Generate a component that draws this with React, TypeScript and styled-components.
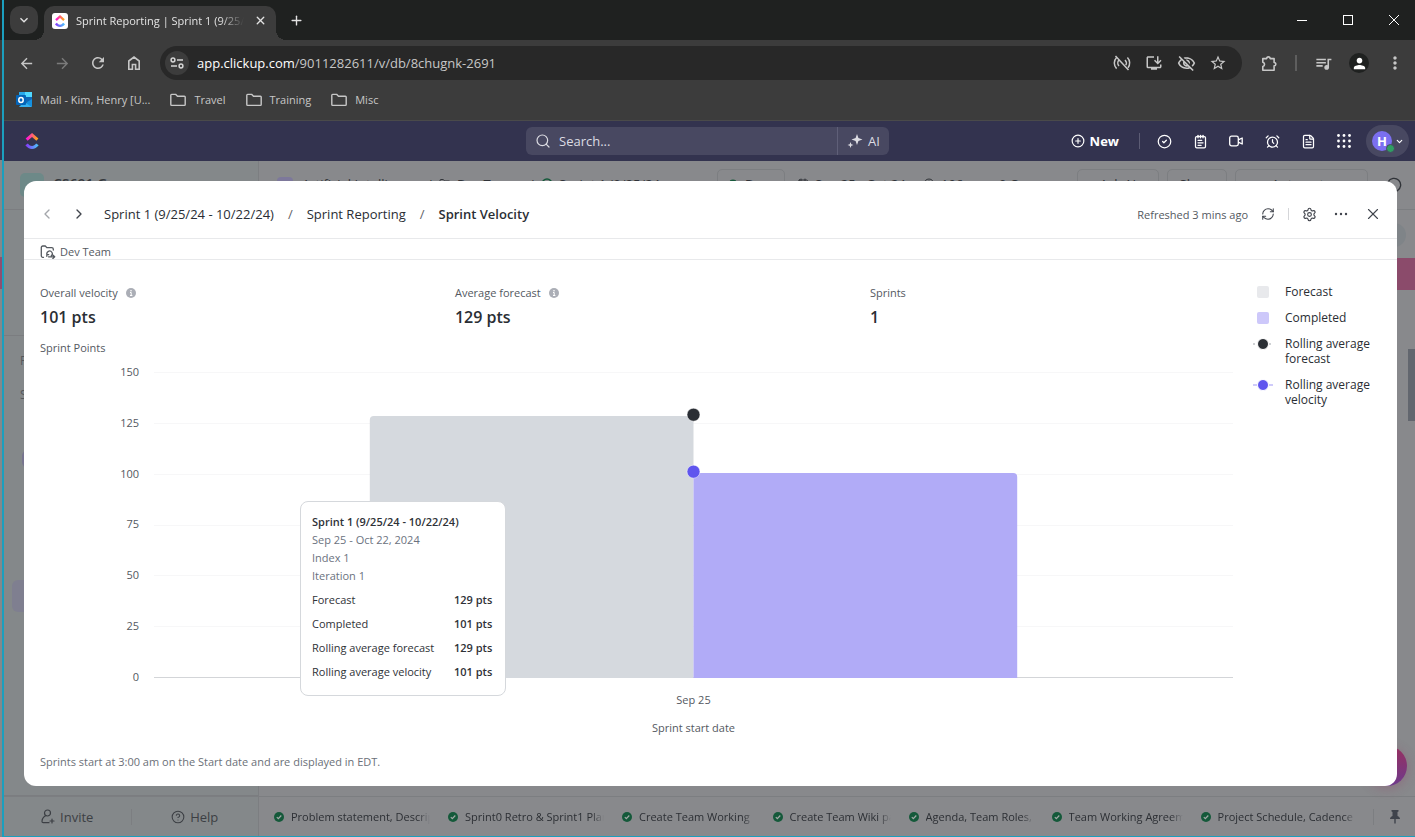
import React from "react";
import styled, { createGlobalStyle, css } from "styled-components";
import {
  MdArrowBack,
  MdArrowForward,
  MdRefresh,
  MdOutlineInstallDesktop,
  MdOutlineVisibilityOff,
  MdStarBorder,
  MdQueueMusic,
  MdMoreVert,
  MdPerson,
  MdKeyboardArrowDown,
} from "react-icons/md";
import {
  AlarmClock,
  Calendar,
  ChevronDown,
  ChevronLeft,
  ChevronRight,
  Circle,
  CircleCheck,
  CircleHelp,
  CirclePlus,
  Clock,
  FileText,
  Folder,
  MessageCircle,
  NotepadText,
  Plus,
  RefreshCw,
  Search,
  Settings,
  X,
} from "lucide-react";

const GlobalStyle = createGlobalStyle`
  *, *::before, *::after { box-sizing: border-box; }
  body { margin: 0; font-family: "Open Sans", "Noto Sans", sans-serif; font-size: 13px; color: #2a2e34; }
  button, input { font: inherit; color: inherit; }
  button { background: none; border: 0; padding: 0; cursor: pointer; }
  a { color: inherit; text-decoration: none; }
  svg { display: block; flex: none; }
`;

/* ---------- desktop and browser window ---------- */

const Desktop = styled.div`
  display: flex;
  min-height: 100vh;
`;

const NeighbourEdge = styled.div`
  width: 2px;
  background: linear-gradient(
    #1f2120 0 40px,
    #3c3c3c 40px 120px,
    #33334f 120px 160px,
    #84888a 160px 257px,
    #8f4f6f 257px 289px,
    #84888a 289px
  );
`;

const BrowserWindow = styled.div`
  flex: 1;
  min-width: 0;
  display: flex;
  flex-direction: column;
  border-left: 2px solid #1b9fbe;
  border-bottom: 1px solid #1b9fbe;
`;

const TabStrip = styled.div`
  height: 40px;
  display: flex;
  background: #1f2120;
  color: #e3e3e3;
  padding-left: 6px;
`;

const TabSearch = styled.button`
  width: 28px;
  height: 28px;
  margin: 6px 6px 0 0;
  border-radius: 10px;
  background: #3c3c3c;
  display: grid;
  place-items: center;
`;

const Tab = styled.div`
  position: relative;
  width: 232px;
  height: 34px;
  margin-top: 6px;
  padding: 0 8px 5px;
  border-radius: 10px 10px 0 0;
  background: #3c3c3c;
  display: flex;
  align-items: center;
  gap: 8px;
  font-size: 11px;
  &::before,
  &::after {
    content: "";
    position: absolute;
    bottom: 0;
    width: 10px;
    height: 10px;
  }
  &::before {
    left: -10px;
    background: radial-gradient(circle at 0 0, transparent 10px, #3c3c3c 10px);
  }
  &::after {
    right: -10px;
    background: radial-gradient(circle at 100% 0, transparent 10px, #3c3c3c 10px);
  }
`;

const Favicon = styled.span`
  width: 16px;
  height: 16px;
  border-radius: 3px;
  background: #fff;
  display: grid;
  place-items: center;
`;

const FadingText = styled.span<{ $fade?: number }>`
  flex: 1;
  min-width: 0;
  overflow: hidden;
  white-space: nowrap;
  mask-image: linear-gradient(to left, transparent, #000 ${(p) => p.$fade ?? 24}px);
`;

const TabButton = styled.button`
  width: 16px;
  height: 16px;
  display: grid;
  place-items: center;
`;

const NewTab = styled(TabButton)`
  width: 40px;
  height: 40px;
`;

const WindowControls = styled.div`
  margin-left: auto;
  width: 136px;
  display: flex;
  overflow: hidden;
  color: #fff;
`;

const WindowButton = styled.button`
  flex: none;
  width: 46px;
  height: 40px;
  display: grid;
  place-items: center;
`;

const Toolbar = styled.div`
  height: 46px;
  display: flex;
  align-items: center;
  background: #3c3c3c;
  color: #c7c7c7;
  padding: 0 2px 0 4px;
`;

const ToolButton = styled.button<{ $dim?: boolean; $width?: number }>`
  width: ${(p) => p.$width ?? 36}px;
  height: 36px;
  display: grid;
  place-items: center;
  color: ${(p) => (p.$dim ? "#7b7b7b" : "#c7c7c7")};
`;

const Omnibox = styled.div`
  flex: 1;
  height: 34px;
  margin: 0 9px 0 8px;
  padding: 0 8px 0 5px;
  border-radius: 17px;
  background: #282828;
  display: flex;
  align-items: center;
`;

const SiteInfo = styled.button`
  width: 24px;
  height: 24px;
  border-radius: 12px;
  background: #3c3c3c;
  display: grid;
  place-items: center;
  margin-right: 8px;
`;

const UrlText = styled.div`
  flex: 1;
  font-size: 13px;
  color: #c7c7c7;
  b {
    font-weight: 400;
    color: #fff;
  }
`;

const ToolDivider = styled.span`
  width: 2px;
  height: 16px;
  margin: 0 8px;
  background: #5e5e5e;
`;

const ProfileDot = styled.span`
  width: 20px;
  height: 20px;
  border-radius: 10px;
  background: #1f2120;
  color: #fff;
  display: grid;
  place-items: center;
`;

const Bookmarks = styled.nav`
  height: 35px;
  display: flex;
  align-items: center;
  gap: 20px;
  padding: 0 12px 7px;
  background: #3c3c3c;
  border-bottom: 1px solid #4a4a4a;
  color: #c7c7c7;
  font-size: 11px;
`;

const Bookmark = styled.a`
  display: flex;
  align-items: center;
  gap: 8px;
`;

/* ---------- ClickUp top bar ---------- */

const AppBar = styled.header`
  height: 40px;
  display: grid;
  grid-template-columns: minmax(0, 1fr) 363px minmax(0, 1fr);
  align-items: center;
  padding-right: 4px;
  background: #33334f;
  color: #fff;
`;

const AppBarSide = styled.div<{ $end?: boolean }>`
  display: flex;
  align-items: center;
  ${(p) =>
    p.$end
      ? css`
          justify-content: flex-end;
          padding-right: 2px;
        `
      : css`
          padding-left: 20px;
        `}
`;

const SearchGroup = styled.div`
  height: 28px;
  display: flex;
  border-radius: 6px;
  background: #484861;
  color: #dcdce3;
`;

const SearchField = styled.label`
  flex: 1;
  display: flex;
  align-items: center;
  gap: 8px;
  padding-left: 9px;
  input {
    flex: 1;
    min-width: 0;
    padding: 0;
    border: 0;
    outline: 0;
    background: none;
    font-size: 13px;
    &::placeholder {
      color: #dcdce3;
      opacity: 1;
    }
  }
`;

const AiButton = styled.button`
  width: 52px;
  display: flex;
  align-items: center;
  justify-content: center;
  gap: 5px;
  border-left: 1px solid #5f5f78;
  font-size: 13px;
`;

const NewButton = styled.button`
  display: flex;
  align-items: center;
  gap: 5px;
  font-size: 13px;
  font-weight: 700;
`;

const BarDivider = styled.span`
  width: 1px;
  height: 16px;
  margin: 0 6px 0 20px;
  background: #5c5c74;
`;

const BarButton = styled.button`
  width: 36px;
  height: 32px;
  display: grid;
  place-items: center;
`;

const AccountPill = styled.button`
  width: 43px;
  height: 32px;
  margin-left: 4px;
  padding: 0 5px 0 6px;
  border-radius: 16px;
  background: #484861;
  display: flex;
  align-items: center;
  justify-content: space-between;
`;

const Avatar = styled.span`
  position: relative;
  width: 20px;
  height: 20px;
  border-radius: 10px;
  background: #7b6ff0;
  display: grid;
  place-items: center;
  font-size: 13px;
  line-height: 20px;
  font-weight: 700;
  &::after {
    content: "";
    position: absolute;
    right: -3px;
    bottom: -2px;
    width: 9px;
    height: 9px;
    border-radius: 5px;
    border: 1px solid #484861;
    background: #2f9e63;
  }
`;

/* ---------- dimmed page behind the dialog ---------- */

const Stage = styled.main`
  flex: 1;
  display: grid;
  > * {
    grid-area: 1 / 1;
    min-width: 0;
  }
`;

const Backdrop = styled.div`
  position: relative;
  overflow: hidden;
  display: grid;
  grid-template-columns: 255px minmax(0, 1fr);
  grid-template-rows: 49px minmax(0, 1fr) 40px;
  background: #88898c;
`;

const DimSidebar = styled.aside<{ $row: number }>`
  grid-area: ${(p) => p.$row} / 1;
  background: #84888a;
  border-right: 1px solid #7c7e81;
  border-bottom: ${(p) => (p.$row === 3 ? "0" : "1px solid #7b7d80")};
`;

const Workspace = styled(DimSidebar)`
  display: flex;
  padding: 12px 16px 0;
  gap: 9px;
  font-size: 14px;
  font-weight: 600;
  color: #35383d;
  i {
    width: 24px;
    height: 24px;
    border-radius: 5px;
    background: #6d8988;
  }
  span {
    line-height: 22px;
  }
`;

const SidebarList = styled(DimSidebar)`
  position: relative;
  padding: 142px 16px 0;
  color: #55585c;
  font-size: 12px;
  line-height: 18px;
  p {
    margin: 0 0 16px;
  }
  &::before {
    content: "";
    position: absolute;
    left: 0;
    right: 0;
    top: 125px;
    border-top: 1px solid #7b7d80;
  }
`;

const SidebarChip = styled.span<{ $top: number; $left: number; $height: number; $active?: boolean }>`
  position: absolute;
  top: ${(p) => p.$top}px;
  left: ${(p) => p.$left}px;
  right: 12px;
  height: ${(p) => p.$height}px;
  border-radius: 6px;
  background: ${(p) => (p.$active ? "#7f7f90" : "#77748f")};
`;

const CrumbBar = styled.div`
  grid-area: 1 / 2;
  display: flex;
  align-items: flex-start;
  justify-content: space-between;
  padding: 8px 3px 0 18px;
  border-bottom: 1px solid #7c7e81;
  color: #303338;
  white-space: nowrap;
`;

const CrumbGroup = styled.div`
  display: flex;
  gap: 8px;
`;

const CrumbCell = styled.span<{ $width: number }>`
  width: ${(p) => p.$width}px;
  display: flex;
  gap: 6px;
  line-height: 30px;
  svg {
    margin-top: 9px;
  }
  i {
    width: 16px;
    height: 16px;
    margin: 8px 3px 0 0;
    border-radius: 4px;
    background: #7d789b;
  }
`;

const CrumbList = styled.div`
  display: flex;
`;

const StatusButton = styled.button`
  width: 68px;
  height: 32px;
  margin-right: 12px;
  padding-left: 9px;
  border: 1px solid #7c7e81;
  border-radius: 5px;
  display: flex;
  gap: 6px;
  line-height: 28px;
  svg {
    margin-top: 9px;
  }
`;

const DimButton = styled.button<{ $width: number }>`
  width: ${(p) => p.$width}px;
  height: 32px;
  padding-bottom: 3px;
  border: 1px solid #7c7e81;
  border-radius: 5px;
`;

const DimContent = styled.div`
  grid-area: 2 / 2;
  position: relative;
`;

const RoundButton = styled.button`
  position: absolute;
  top: 13px;
  right: 9px;
  width: 24px;
  height: 24px;
  border-radius: 12px;
  background: #7f8488;
`;

const PinkBand = styled.div`
  position: absolute;
  top: 48px;
  left: 17px;
  right: 0;
  height: 32px;
  background: #8b4b6b;
`;

const ScrollThumb = styled.div`
  position: absolute;
  top: 139px;
  right: 0;
  width: 7px;
  height: 72px;
  background: #62666e;
`;

const HelpBubble = styled.button`
  position: absolute;
  right: 8px;
  bottom: 10px;
  width: 40px;
  height: 40px;
  border-radius: 20px;
  background: linear-gradient(#96305f, #6f3a8c);
  box-shadow: 0 2px 12px rgba(150, 48, 95, 0.3);
`;

const SidebarActions = styled(DimSidebar)`
  display: flex;
  align-items: center;
  border-top: 1px solid #7c7e81;
  color: #3c3f44;
`;

const SidebarAction = styled.button`
  flex: 1;
  height: 16px;
  display: flex;
  align-items: center;
  justify-content: center;
  gap: 5px;
  font-size: 13px;
  & + & {
    border-left: 1px solid #7c7e81;
  }
`;

const TaskTray = styled.div`
  grid-area: 3 / 2;
  display: flex;
  align-items: center;
  gap: 17px;
  padding-left: 14px;
  border-top: 1px solid #7c7e81;
  color: #2c2f34;
  font-size: 11px;
`;

const TrayItem = styled.a<{ $width: number }>`
  width: ${(p) => p.$width}px;
  display: flex;
  align-items: center;
  gap: 6px;
`;

const PinButton = styled.button`
  margin-left: auto;
  width: 42px;
  height: 16px;
  display: grid;
  place-items: center;
  border-left: 1px solid #7c7e81;
  color: #3f434c;
`;

/* ---------- dialog ---------- */

const Dialog = styled.section`
  position: relative;
  margin: 20px 18px 50px 20px;
  border-radius: 12px;
  background: #fff;
  display: flex;
  flex-direction: column;
`;

const DialogHeader = styled.header`
  height: 58px;
  display: flex;
  align-items: center;
  justify-content: space-between;
  padding: 10px 8px 1px 7px;
  border-bottom: 1px solid #e8e9eb;
`;

const HeaderGroup = styled.div`
  display: flex;
  align-items: center;
`;

const IconButton = styled.button<{ $muted?: boolean }>`
  width: 32px;
  height: 32px;
  display: grid;
  place-items: center;
  color: ${(p) => (p.$muted ? "#a3a6ab" : "#40444c")};
`;

const Breadcrumbs = styled.nav`
  display: flex;
  gap: 14px;
  margin-left: 9px;
  font-size: 13px;
  line-height: 20px;
  span {
    color: #5f6368;
  }
  strong {
    font-weight: 600;
  }
`;

const Refreshed = styled.span`
  font-size: 11px;
  color: #54595f;
  margin-right: 4px;
`;

const HeaderDivider = styled.span`
  width: 1px;
  height: 12px;
  margin: 0 4px;
  background: #d5d6d9;
`;

const LocationRow = styled.div`
  height: 21px;
  display: flex;
  align-items: center;
  gap: 4px;
  padding: 5px 16px 0;
  border-bottom: 1px solid #e8e9eb;
  font-size: 11px;
  line-height: 16px;
  color: #54595f;
`;

const Report = styled.div`
  display: flex;
  padding: 24px 0 0 16px;
`;

const ReportMain = styled.div`
  flex: 1;
  min-width: 0;
`;

const Stats = styled.dl`
  margin: 0;
  display: grid;
  grid-template-columns: 8fr 8fr 7fr;
`;

const Stat = styled.div`
  dt {
    display: flex;
    align-items: center;
    gap: 8px;
    font-size: 11px;
    line-height: 18px;
    color: #54595f;
  }
  dd {
    margin: 3px 0 0;
    font-size: 16px;
    line-height: 24px;
    font-weight: 600;
  }
`;

const InfoDot = styled.svg`
  width: 10px;
  height: 10px;
`;

const AxisTitle = styled.div<{ $top: number; $center?: boolean }>`
  margin-top: ${(p) => p.$top}px;
  font-size: 11px;
  line-height: 18px;
  color: #54595f;
  text-align: ${(p) => (p.$center ? "center" : "left")};
`;

const Chart = styled.div`
  display: grid;
  grid-template-columns: 99px minmax(0, 1fr);
  column-gap: 15px;
  margin-top: 7px;
`;

const YLabels = styled.div`
  height: 321px;
  display: flex;
  flex-direction: column;
  justify-content: space-between;
  text-align: right;
  font-size: 11px;
  line-height: 16px;
  color: #54595f;
`;

const PlotArea = styled.div`
  position: relative;
  padding-top: 8px;
  svg {
    width: 100%;
    height: 306px;
  }
`;

const XLabels = styled.div`
  grid-column: 2;
  padding-top: 6px;
`;

const Tooltip = styled.div`
  position: absolute;
  left: 146px;
  top: 137px;
  width: 206px;
  padding: 11px;
  border: 1px solid #d5d8dc;
  border-radius: 8px;
  background: #fff;
  font-size: 11px;
  line-height: 18px;
  color: #6b7280;
  strong {
    font-weight: 600;
    color: #2f3237;
  }
  div {
    white-space: nowrap;
  }
  table {
    width: 100%;
    margin-top: 3px;
    border-collapse: collapse;
    color: #2f3237;
    line-height: 24px;
    white-space: nowrap;
  }
  th,
  td {
    padding: 0;
    text-align: left;
    font-weight: 400;
  }
  td {
    width: 40px;
    font-weight: 600;
  }
`;

const Legend = styled.ul`
  width: 164px;
  margin: 0;
  padding: 0 20px;
  list-style: none;
  display: flex;
  flex-direction: column;
  gap: 11px;
  font-size: 12px;
  line-height: 15px;
`;

const LegendItem = styled.li`
  display: flex;
  gap: 12px;
  svg {
    margin-top: 2px;
  }
`;

const Footnote = styled.p`
  margin: 0;
  padding: 16px 16px 15px;
  font-size: 11px;
  line-height: 18px;
  color: #6b7078;
`;

/* ---------- icons ---------- */

function ClickUpLogo({ size, id }: { size: number; id: string }) {
  return (
    <svg width={size} height={size} viewBox="0 0 24 24">
      <defs>
        <linearGradient id={`${id}-top`} x1="0" x2="1">
          <stop offset="0" stopColor="#ff02f0" />
          <stop offset="1" stopColor="#ffb600" />
        </linearGradient>
        <linearGradient id={`${id}-base`} x1="0" x2="1">
          <stop offset="0" stopColor="#8930fd" />
          <stop offset="1" stopColor="#49ccf9" />
        </linearGradient>
      </defs>
      <path fill={`url(#${id}-base)`} d="M2 18.439l3.69-2.828c1.961 2.56 4.044 3.739 6.363 3.739 2.307 0 4.33-1.166 6.203-3.704L22 18.405C19.298 22.065 15.941 24 12.053 24 8.178 24 4.788 22.078 2 18.439z" />
      <path fill={`url(#${id}-top)`} d="M12.04 6.15l-6.568 5.66-3.036-3.52L12.055 0l9.543 8.296-3.05 3.509z" />
    </svg>
  );
}

const TuneIcon = () => (
  <svg width="14" height="14" viewBox="0 0 14 14" fill="none" stroke="#d5d5d5" strokeWidth="1.5">
    <circle cx="3" cy="4" r="1.9" />
    <path d="M7 4h6M1 10h6" />
    <circle cx="11" cy="10" r="1.9" />
  </svg>
);

const FolderIcon = () => (
  <svg width="16" height="14" viewBox="0 0 16 14" fill="none" stroke="#c7c7c7" strokeWidth="1.4">
    <path d="M.8 11.6V2.2c0-.5.3-.8.8-.8h4.2l1.7 1.8h6.9c.5 0 .8.3.8.8v7.6c0 .5-.3.8-.8.8H1.6c-.5 0-.8-.3-.8-.8z" />
  </svg>
);

const OutlookIcon = () => (
  <svg width="16" height="16" viewBox="0 0 16 16">
    <path fill="#28a8ea" d="M3 0h13v9H3z" />
    <path fill="#50d9ff" d="M9 0h7v5H9z" />
    <path fill="#0f78d4" d="M3 4h7v5H3z" />
    <path fill="#1066b5" d="M9 5h7v5H9z" />
    <path fill="#1490df" d="M3 15l13-8v7a1 1 0 0 1-1 1z" />
    <path fill="#35b1ef" d="M16 15L8 10l-5 5z" />
    <rect y="3" width="10" height="10" rx="1" fill="#0364b8" />
    <ellipse cx="5" cy="8" rx="2.2" ry="2.500" fill="none" stroke="#fff" strokeWidth="1.500" />
  </svg>
);

const NoBroadcastIcon = () => (
  <svg width="18" height="16" viewBox="0 0 18 16" fill="none" stroke="currentColor" strokeWidth="1.5">
    <path d="M3.600 2.400a8 8 0 0 0 0 11.200M6 5a4.400 4.400 0 0 0 0 6M14.400 2.400a8 8 0 0 1 .6 10.400M12 5a4.400 4.400 0 0 1 .8 5.200M2.500 1l13 14" />
  </svg>
);

const ExtensionIcon = () => (
  <svg width="17" height="17" viewBox="0 0 17 17" fill="none" stroke="currentColor" strokeWidth="1.600" strokeLinejoin="round">
    <path d="M1.800 3.600h3.900a1.700 1.700 0 0 1 3.400 0h4v3.900a1.700 1.700 0 0 1 0 3.400v4.300H1.800v-3.700a2.200 2.200 0 0 0 0-4.300z" />
  </svg>
);

const CameraIcon = () => (
  <svg width="14" height="12" viewBox="0 0 14 12" fill="none" stroke="currentColor" strokeWidth="1.300" strokeLinejoin="round">
    <rect x=".7" y="1.200" width="8.600" height="9.600" rx="1.800" />
    <path d="M9.300 4.800l3.900-1.800v6L9.300 7.200" />
  </svg>
);

const SparkleIcon = () => (
  <svg width="16" height="16" viewBox="0 0 16 16" fill="currentColor">
    <path d="M10 1l1.400 4.100L15.500 6.500l-4.100 1.400L10 12l-1.400-4.100L4.500 6.500l4.100-1.400z" />
    <path d="M3.500 9l.8 2.200 2.200.8-2.200.8-.8 2.200-.8-2.200L.5 12l2.200-.8z" />
  </svg>
);

const GridIcon = () => (
  <svg width="14" height="14" viewBox="0 0 14 14" fill="#fff">
    {[1.5, 7, 12.5].map((y) => [1.5, 7, 12.5].map((x) => <circle key={`${x}-${y}`} cx={x} cy={y} r="1.400" />))}
  </svg>
);

const DotsIcon = () => (
  <svg width="14" height="4" viewBox="0 0 14 4" fill="currentColor">
    <circle cx="2" cy="2" r="1.200" />
    <circle cx="7" cy="2" r="1.200" />
    <circle cx="12" cy="2" r="1.200" />
  </svg>
);

const SprintFolderIcon = () => (
  <svg width="16" height="14" viewBox="0 0 16 14" fill="none" stroke="#54595f" strokeWidth="1.300" strokeLinecap="round" strokeLinejoin="round">
    <path d="M3.500 12.300H2.800A1.500 1.500 0 0 1 1.300 10.800V2.500A1.500 1.500 0 0 1 2.800 1h2.500l1.500 1.600h5A1.500 1.500 0 0 1 13.300 4v1" />
    <path d="M8.500 11.800h6M12.800 10l1.900 1.800-1.900 1.800M7 9.600a2.700 2.700 0 1 1 4.300 1.200M6.800 11.300l.1-1.900 1.800.3" />
  </svg>
);

const DoneIcon = () => (
  <svg width="12" height="12" viewBox="0 0 12 12">
    <circle cx="6" cy="6" r="5" fill="#14593a" />
    <path d="M3.800 6.200l1.500 1.500 3-3.200" fill="none" stroke="#a4a9a8" strokeWidth="1.200" />
  </svg>
);

const InviteIcon = () => (
  <svg width="14" height="15" viewBox="0 0 14 15" fill="none" stroke="currentColor" strokeWidth="1.200" strokeLinecap="round">
    <circle cx="6.500" cy="4" r="3" />
    <path d="M4.500 6.800C2.500 8 1 10 1 12.500c0 .8.500 1.200 1.200 1.200H8M11 10v4M9 12h4" />
  </svg>
);

const PinIcon = () => (
  <svg width="12" height="14" viewBox="0 0 12 14" fill="currentColor">
    <path d="M2.500 0h7v1.500l-1 .5v4c1.500.6 2.500 1.600 2.500 3H6.700v4.500H5.300V9H1c0-1.400 1-2.400 2.500-3V2l-1-.5z" />
  </svg>
);

const InfoIcon = () => (
  <InfoDot viewBox="0 0 10 10">
    <circle cx="5" cy="5" r="5" fill="#abaeb6" />
    <path d="M4 4.500h1.200V7.500M4 7.500h2.400" stroke="#fff" fill="none" />
    <circle cx="5" cy="2.700" r=".8" fill="#fff" />
  </InfoDot>
);

/* ---------- data ---------- */

const ticks = [150, 125, 100, 75, 50, 25, 0];

const bars = [
  { x: 20, value: 128.3, color: "#d5d9de" },
  { x: 50, value: 100.3, color: "#b1abf7" },
];

const averages = [
  { value: 129, color: "#2a2e34" },
  { value: 101, color: "#5f55ee" },
];

const tooltipRows = [
  ["Forecast", "129 pts"],
  ["Completed", "101 pts"],
  ["Rolling average forecast", "129 pts"],
  ["Rolling average velocity", "101 pts"],
];

const trayItems = [
  { label: "Problem statement, Description", width: 157 },
  { label: "Sprint0 Retro & Sprint1 Planning", width: 157 },
  { label: "Create Team Working", width: 134 },
  { label: "Create Team Wiki page", width: 119 },
  { label: "Agenda, Team Roles, Notes", width: 126 },
  { label: "Team Working Agreement", width: 132 },
  { label: "Project Schedule, Cadence", width: 157 },
];

const plotHeight = 305;
const toY = (value: number) => plotHeight * (1 - value / 150);

function Plot() {
  return (
    <svg role="img" aria-label="Sprint velocity chart">
      {ticks.map((t) => (
        <rect key={t} x="0" y={Math.round(toY(t))} width="100%" height="1" fill={t ? "#f7f7f8" : "#d3d5d8"} />
      ))}
      {bars.map((b) => (
        <rect key={b.x} x={`${b.x}%`} y={toY(b.value)} width="30%" height={plotHeight + 10} rx="4" fill={b.color} />
      ))}
      {averages.map((a) => (
        <circle key={a.value} cx="50%" cy={toY(a.value)} r="6.500" fill={a.color} stroke="#fff" strokeOpacity=".5" />
      ))}
    </svg>
  );
}

function Swatch({ color }: { color: string }) {
  return (
    <svg width="20" height="12">
      <rect x="4" width="12" height="12" rx="2" fill={color} />
    </svg>
  );
}

function LineMarker({ color, line, dashed }: { color: string; line: string; dashed?: boolean }) {
  return (
    <svg width="20" height="12">
      <path d="M0 6h20" stroke={line} strokeWidth="2" strokeDasharray={dashed ? "2 2" : undefined} />
      <circle cx="10" cy="6" r="5.500" fill={color} stroke="#fff" />
    </svg>
  );
}

export default function App() {
  return (
    <>
      <GlobalStyle />
      <Desktop>
        <NeighbourEdge />
        <BrowserWindow>
          <TabStrip>
            <TabSearch aria-label="Search tabs">
              <MdKeyboardArrowDown size={16} />
            </TabSearch>
            <Tab>
              <Favicon>
                <ClickUpLogo size={12} id="fav" />
              </Favicon>
              <FadingText>Sprint Reporting | Sprint 1 (9/25/24 - 10/22/24)</FadingText>
              <TabButton aria-label="Close tab">
                <X size={13} strokeWidth={2.5} />
              </TabButton>
            </Tab>
            <NewTab aria-label="New tab">
              <Plus size={15} strokeWidth={2.2} />
            </NewTab>
            <WindowControls>
              <WindowButton aria-label="Minimize">
                <svg width="10" height="10">
                  <path d="M0 5.500h10" stroke="#fff" />
                </svg>
              </WindowButton>
              <WindowButton aria-label="Maximize">
                <svg width="10" height="10">
                  <rect x=".5" y=".5" width="9" height="9" fill="none" stroke="#fff" />
                </svg>
              </WindowButton>
              <WindowButton aria-label="Close window">
                <svg width="10" height="10">
                  <path d="M0 0l10 10M10 0L0 10" stroke="#fff" />
                </svg>
              </WindowButton>
            </WindowControls>
          </TabStrip>

          <Toolbar>
            <ToolButton aria-label="Back">
              <MdArrowBack size={17} />
            </ToolButton>
            <ToolButton aria-label="Forward" $dim>
              <MdArrowForward size={17} />
            </ToolButton>
            <ToolButton aria-label="Reload">
              <MdRefresh size={18} />
            </ToolButton>
            <ToolButton aria-label="Home">
              <svg width="14" height="16" viewBox="0 0 14 16" fill="none" stroke="currentColor" strokeWidth="1.600">
                <path d="M1.800 6L7 2l5.200 4v8.200H8.600V9.500H5.400v4.700H1.800z" />
              </svg>
            </ToolButton>
            <Omnibox>
              <SiteInfo aria-label="Site information">
                <TuneIcon />
              </SiteInfo>
              <UrlText>
                <b>app.clickup.com</b>/9011282611/v/db/8chugnk-2691
              </UrlText>
              <ToolButton $width={32} aria-label="Broadcast off">
                <NoBroadcastIcon />
              </ToolButton>
              <ToolButton $width={32} aria-label="Install app">
                <MdOutlineInstallDesktop size={18} />
              </ToolButton>
              <ToolButton $width={32} aria-label="Third-party cookies blocked">
                <MdOutlineVisibilityOff size={19} />
              </ToolButton>
              <ToolButton $width={32} aria-label="Bookmark">
                <MdStarBorder size={18} />
              </ToolButton>
            </Omnibox>
            <ToolButton aria-label="Extensions">
              <ExtensionIcon />
            </ToolButton>
            <ToolDivider />
            <ToolButton aria-label="Media">
              <MdQueueMusic size={19} />
            </ToolButton>
            <ToolButton aria-label="Profile">
              <ProfileDot>
                <MdPerson size={17} />
              </ProfileDot>
            </ToolButton>
            <ToolButton aria-label="Menu">
              <MdMoreVert size={20} />
            </ToolButton>
          </Toolbar>

          <Bookmarks>
            <Bookmark href="#mail">
              <OutlookIcon />
              Mail - Kim, Henry [U...
            </Bookmark>
            {["Travel", "Training", "Misc"].map((name) => (
              <Bookmark key={name} href={`#${name}`}>
                <FolderIcon />
                {name}
              </Bookmark>
            ))}
          </Bookmarks>

          <AppBar>
            <AppBarSide>
              <ClickUpLogo size={16} id="bar" />
            </AppBarSide>
            <SearchGroup>
              <SearchField>
                <Search size={16} strokeWidth={1.8} />
                <input type="text" aria-label="Search" placeholder="Search..." />
              </SearchField>
              <AiButton>
                <SparkleIcon />
                AI
              </AiButton>
            </SearchGroup>
            <AppBarSide $end>
              <NewButton>
                <CirclePlus size={14} />
                New
              </NewButton>
              <BarDivider />
              <BarButton aria-label="Tasks">
                <CircleCheck size={15} />
              </BarButton>
              <BarButton aria-label="Notepad">
                <NotepadText size={15} />
              </BarButton>
              <BarButton aria-label="Clips">
                <CameraIcon />
              </BarButton>
              <BarButton aria-label="Reminders">
                <AlarmClock size={15} />
              </BarButton>
              <BarButton aria-label="Docs">
                <FileText size={15} />
              </BarButton>
              <BarButton aria-label="Apps">
                <GridIcon />
              </BarButton>
              <AccountPill aria-label="Account">
                <Avatar>H</Avatar>
                <ChevronDown size={9} strokeWidth={3} />
              </AccountPill>
            </AppBarSide>
          </AppBar>

          <Stage>
            <Backdrop>
              <Workspace $row={1}>
                <i />
                <span>CS691 G</span>
              </Workspace>
              <SidebarList $row={2}>
                <p>F</p>
                <p>S</p>
                <SidebarChip $top={240} $left={18} $height={18} />
                <SidebarChip $top={370} $left={8} $height={32} $active />
              </SidebarList>
              <CrumbBar>
                <CrumbList>
                  <CrumbCell $width={150}>
                    <i />
                    Artificial Intelligen
                  </CrumbCell>
                  <CrumbCell $width={12}>/</CrumbCell>
                  <CrumbCell $width={90}>
                    <Folder size={12} />
                    Dev Team
                  </CrumbCell>
                  <CrumbCell $width={12}>/</CrumbCell>
                  <CrumbCell $width={176}>
                    <Circle size={12} color="#14593a" strokeWidth={3} />
                    Sprint 1 (9/25/24
                  </CrumbCell>
                  <StatusButton>
                    <Circle size={12} color="#14593a" fill="#14593a" />
                    Done
                  </StatusButton>
                  <CrumbCell $width={126}>
                    <Calendar size={12} />
                    Sep 25 - Oct 24
                  </CrumbCell>
                  <CrumbCell $width={76}>
                    <Clock size={12} />
                    106
                  </CrumbCell>
                  <CrumbCell $width={40}>0 C</CrumbCell>
                </CrumbList>
                <CrumbGroup>
                  <DimButton $width={82}>Ask AI</DimButton>
                  <DimButton $width={60}>Share</DimButton>
                  <DimButton $width={133}>Automate</DimButton>
                  <BarButton aria-label="Comments">
                    <MessageCircle size={16} />
                  </BarButton>
                </CrumbGroup>
              </CrumbBar>
              <DimContent>
                <RoundButton aria-label="Next column" />
                <PinkBand />
                <ScrollThumb />
                <HelpBubble aria-label="Help" />
              </DimContent>
              <SidebarActions $row={3}>
                <SidebarAction>
                  <InviteIcon />
                  Invite
                </SidebarAction>
                <SidebarAction>
                  <CircleHelp size={14} strokeWidth={1.8} />
                  Help
                </SidebarAction>
              </SidebarActions>
              <TaskTray>
                {trayItems.map((item) => (
                  <TrayItem key={item.label} href="#task" $width={item.width}>
                    <DoneIcon />
                    <FadingText $fade={12}>{item.label}</FadingText>
                  </TrayItem>
                ))}
                <PinButton aria-label="Pin tray">
                  <PinIcon />
                </PinButton>
              </TaskTray>
            </Backdrop>

            <Dialog role="dialog" aria-label="Sprint Velocity">
              <DialogHeader>
                <HeaderGroup>
                  <IconButton $muted aria-label="Previous">
                    <ChevronLeft size={16} />
                  </IconButton>
                  <IconButton aria-label="Next">
                    <ChevronRight size={16} />
                  </IconButton>
                  <Breadcrumbs>
                    <a href="#sprint">Sprint 1 (9/25/24 - 10/22/24)</a>
                    <span>/</span>
                    <a href="#reporting">Sprint Reporting</a>
                    <span>/</span>
                    <strong>Sprint Velocity</strong>
                  </Breadcrumbs>
                </HeaderGroup>
                <HeaderGroup>
                  <Refreshed>Refreshed 3 mins ago</Refreshed>
                  <IconButton aria-label="Refresh">
                    <RefreshCw size={14} strokeWidth={1.8} />
                  </IconButton>
                  <HeaderDivider />
                  <IconButton aria-label="Settings">
                    <Settings size={15} strokeWidth={1.8} />
                  </IconButton>
                  <IconButton aria-label="More">
                    <DotsIcon />
                  </IconButton>
                  <IconButton aria-label="Close">
                    <X size={18} strokeWidth={1.5} />
                  </IconButton>
                </HeaderGroup>
              </DialogHeader>
              <LocationRow>
                <SprintFolderIcon />
                Dev Team
              </LocationRow>
              <Report>
                <ReportMain>
                  <Stats>
                    <Stat>
                      <dt>
                        Overall velocity <InfoIcon />
                      </dt>
                      <dd>101 pts</dd>
                    </Stat>
                    <Stat>
                      <dt>
                        Average forecast <InfoIcon />
                      </dt>
                      <dd>129 pts</dd>
                    </Stat>
                    <Stat>
                      <dt>Sprints</dt>
                      <dd>1</dd>
                    </Stat>
                  </Stats>
                  <AxisTitle $top={10}>Sprint Points</AxisTitle>
                  <Chart>
                    <YLabels>
                      {ticks.map((t) => (
                        <span key={t}>{t}</span>
                      ))}
                    </YLabels>
                    <PlotArea>
                      <Plot />
                      <Tooltip role="tooltip">
                        <div>
                          <strong>Sprint 1 (9/25/24 - 10/22/24)</strong>
                        </div>
                        <div>Sep 25 - Oct 22, 2024</div>
                        <div>Index 1</div>
                        <div>Iteration 1</div>
                        <table>
                          <tbody>
                            {tooltipRows.map(([name, value]) => (
                              <tr key={name}>
                                <th scope="row">{name}</th>
                                <td>{value}</td>
                              </tr>
                            ))}
                          </tbody>
                        </table>
                      </Tooltip>
                    </PlotArea>
                    <XLabels>
                      <AxisTitle $top={0} $center>
                        Sep 25
                      </AxisTitle>
                      <AxisTitle $top={10} $center>
                        Sprint start date
                      </AxisTitle>
                    </XLabels>
                  </Chart>
                </ReportMain>
                <Legend>
                  <LegendItem>
                    <Swatch color="#e8e9ec" />
                    Forecast
                  </LegendItem>
                  <LegendItem>
                    <Swatch color="#cdc8fa" />
                    Completed
                  </LegendItem>
                  <LegendItem>
                    <LineMarker color="#2a2e34" line="#cfd1d4" dashed />
                    Rolling average forecast
                  </LegendItem>
                  <LegendItem>
                    <LineMarker color="#5f55ee" line="#cfcbfa" />
                    Rolling average velocity
                  </LegendItem>
                </Legend>
              </Report>
              <Footnote>Sprints start at 3:00 am on the Start date and are displayed in EDT.</Footnote>
            </Dialog>
          </Stage>
        </BrowserWindow>
      </Desktop>
    </>
  );
}
